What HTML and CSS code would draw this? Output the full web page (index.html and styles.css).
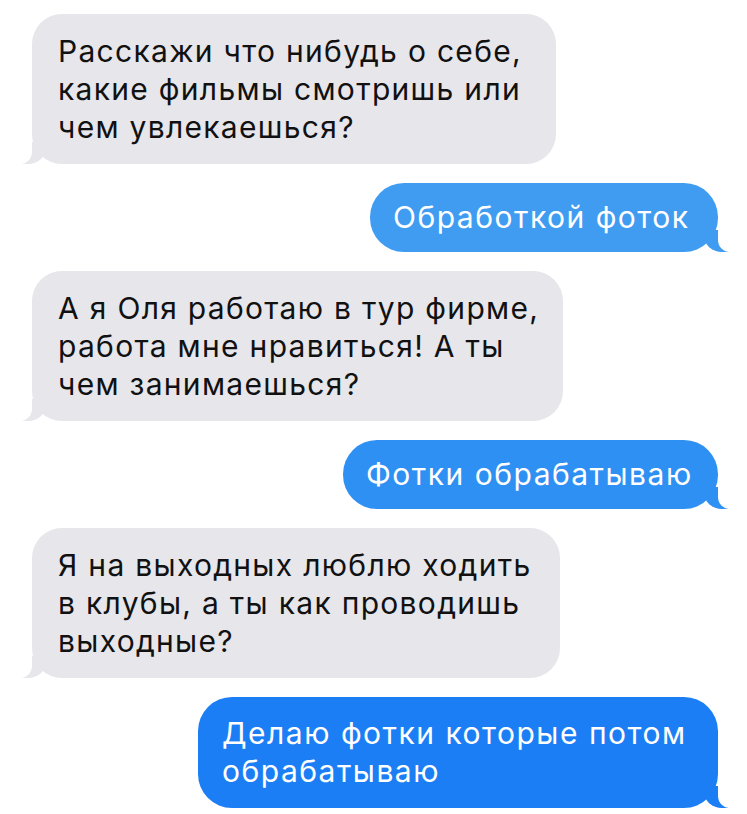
FILE: index.html
```html
<!DOCTYPE html>
<html lang="ru">
<head>
  <meta charset="UTF-8" />
  <meta name="viewport" content="width=device-width, initial-scale=1" />
  <title>Сообщения</title>
  <link rel="stylesheet" href="styles.css">
</head>
<body>

<section class="chat">
  <div class="msg in w1">Расскажи что нибудь о себе,<br>какие фильмы смотришь или<br>чем увлекаешься?</div>
  <div class="msg out c1 w2">Обработкой фоток</div>
  <div class="msg in w3">А я Оля работаю в тур фирме,<br>работа мне нравиться! А ты<br>чем занимаешься?</div>
  <div class="msg out c2 w4">Фотки обрабатываю</div>
  <div class="msg in w5">Я на выходных люблю ходить<br>в клубы, а ты как проводишь<br>выходные?</div>
  <div class="msg out c3 w6 tall">Делаю фотки которые потом<br>обрабатываю</div>
</section>

</body>
</html>
```

FILE: styles.css
```css
body {
  margin: 0;
  background: #fff;
  font-family: Inter, "Liberation Sans", Arial, sans-serif;
}
.chat {
  display: flex;
  flex-direction: column;
  gap: 19px;
  padding: 14px 29px 0 32px;
}
.msg {
  position: relative;
  box-sizing: border-box;
  font-size: 30px;
  line-height: 38px;
  letter-spacing: 1.3px;
  padding: 18px 20px 18px 26px;
  border-radius: 30px;
  white-space: nowrap;
}

/* входящие — серые, хвостик слева */
.msg.in {
  align-self: flex-start;
  background: #e6e6eb;
  color: #111;
}
.msg.in::before {
  content: "";
  position: absolute;
  bottom: 0;
  left: -10px;
  width: 24px;
  height: 22px;
  background: #e6e6eb;
  border-bottom-right-radius: 18px 16px;
}
.msg.in::after {
  content: "";
  position: absolute;
  bottom: 0;
  left: -28px;
  width: 28px;
  height: 22px;
  background: #fff;
  border-bottom-right-radius: 12px;
}

/* исходящие — синие, хвостик справа */
.msg.out {
  align-self: flex-end;
  color: #fff;
  padding: 15px 20px 16px 23px;
  border-radius: 34px;
  letter-spacing: 1.5px;
}
.msg.out.tall {
  padding: 17px 20px 18px 24px;
}
.msg.out::before {
  content: "";
  position: absolute;
  bottom: 0;
  right: -10px;
  width: 24px;
  height: 22px;
  background: inherit;
  border-bottom-left-radius: 18px 16px;
}
.msg.out::after {
  content: "";
  position: absolute;
  bottom: 0;
  right: -28px;
  width: 28px;
  height: 22px;
  background: #fff;
  border-bottom-left-radius: 12px;
}
.c1 { background: #3f9cf1; }
.c2 { background: #2f90f3; }
.c3 { background: #1c7ef5; }

.w1 { width: 524px; }
.w2 { width: 348px; }
.w3 { width: 531px; }
.w4 { width: 375px; }
.w5 { width: 528px; }
.w6 { width: 520px; }
```
